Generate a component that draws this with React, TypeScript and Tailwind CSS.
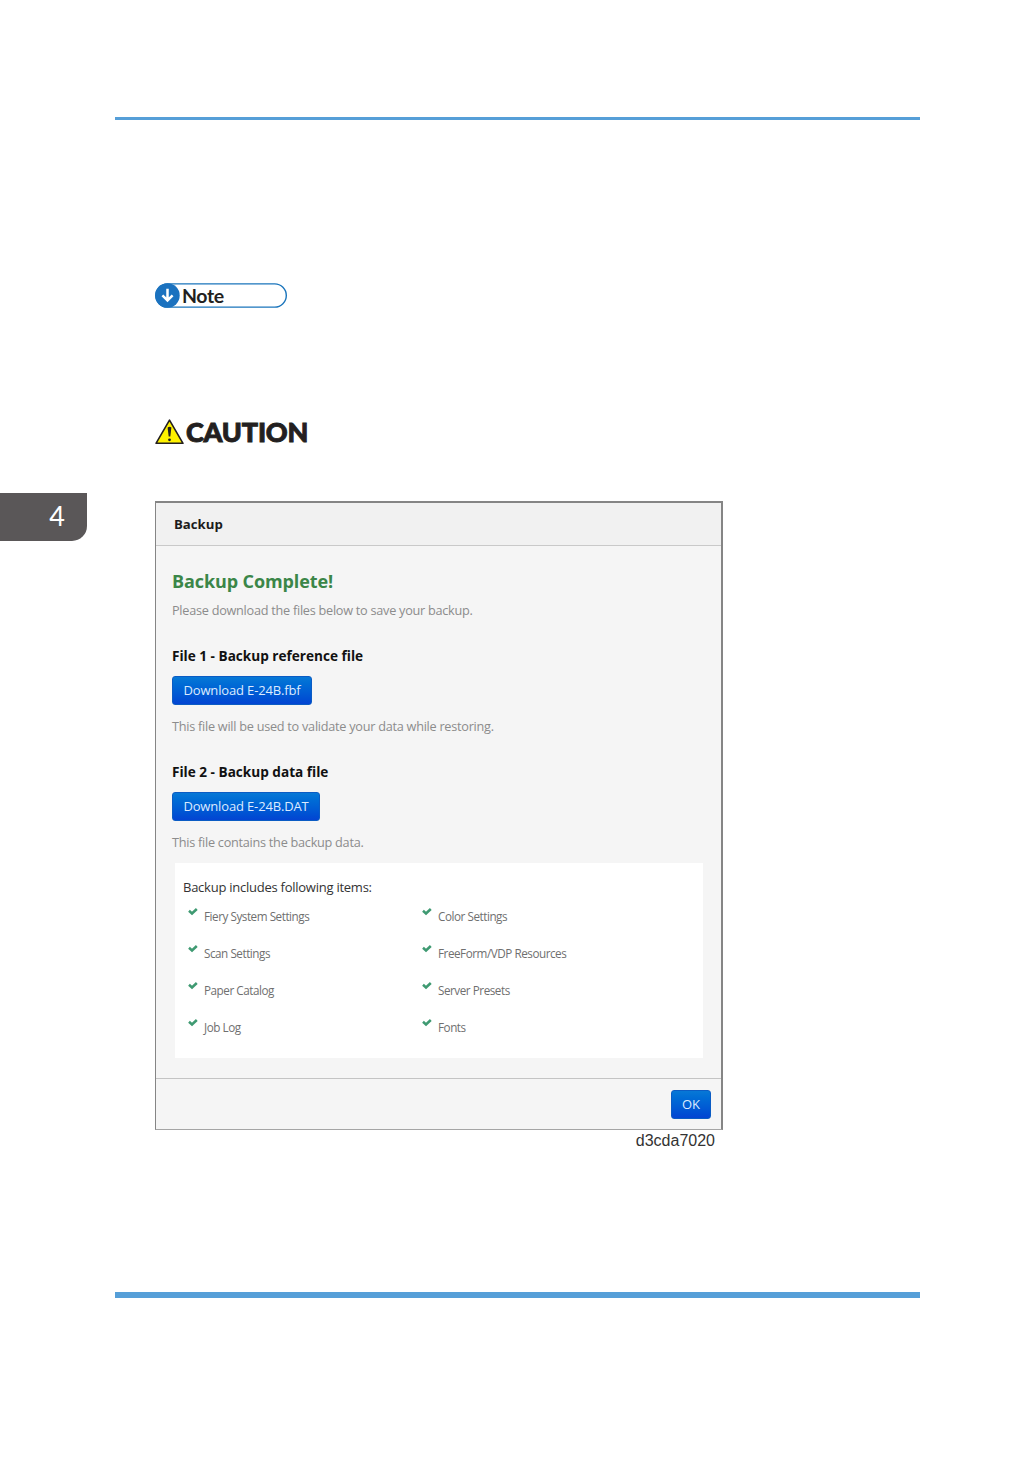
const leftItems = ["Fiery System Settings", "Scan Settings", "Paper Catalog", "Job Log"]
const rightItems = ["Color Settings", "FreeForm/VDP Resources", "Server Presets", "Fonts"]

function NoteLabel() {
  return (
    <svg className="h-[25px] w-[132px]" viewBox="0 0 132 25">
      <rect x="0.7" y="0.9" width="130.6" height="23.2" rx="11.6" fill="#fff" stroke="#1b75bc" strokeWidth="1.4" />
      <circle cx="12.5" cy="12.5" r="12.2" fill="#1b72bf" />
      <path d="M12.5 5.8v11M7.4 12.4l5.1 5 5.1-5" fill="none" stroke="#fff" strokeWidth="2.5" />
      <text x="27" y="19.6" className="fill-[#231f20] font-['Lato',sans-serif] text-[19.5px] font-bold tracking-[-0.4px]">
        Note
      </text>
    </svg>
  )
}

function CautionLabel() {
  return (
    <div className="flex h-[26px] items-center">
      <svg className="h-[26px] w-[29px] shrink-0" viewBox="0 0 29 26">
        <path d="M14.5 1.2 28 24.3H1Z" fill="#fff200" stroke="#231f20" strokeWidth="1.6" strokeLinejoin="round" />
        <path d="M12.6 8.6q1.9-1.6 3.8 0l-1.1 9h-1.6Z" fill="#231f20" />
        <circle cx="14.5" cy="20.8" r="1.4" fill="#231f20" />
      </svg>
      <span className="ml-[2px] font-['Lato',sans-serif] text-[27px] leading-[24px] font-black tracking-[-0.2px] text-[#231f20] [-webkit-text-stroke:0.9px_#231f20]">
        CAUTION
      </span>
    </div>
  )
}

function CheckItem({ label }: { label: string }) {
  return (
    <li className="flex h-[37px] items-start">
      <svg className="h-[9px] w-[10px] shrink-0" viewBox="0 0 10 9">
        <path d="M1 3.8 4 6.4 8.8 2" fill="none" stroke="#3f9a72" strokeWidth="2.6" />
      </svg>
      <span className="ml-[6px] text-[11.7px] leading-[18px] tracking-[-0.46px] text-[#6f6f6f]">{label}</span>
    </li>
  )
}

function Button({ label, className }: { label: string; className: string }) {
  return (
    <button
      className={`flex h-[29px] items-center justify-center rounded-[3px] border border-[#0b5cc4] bg-gradient-to-b from-[#0878d6] to-[#0444d2] pt-px text-[13px] tracking-[-0.15px] whitespace-nowrap text-[#dcebff] ${className}`}
    >
      {label}
    </button>
  )
}

function BackupDialog() {
  return (
    <section className="flex h-[629px] w-[568px] flex-col border border-t-2 border-r-2 border-[#858585] border-b-[#a5a5a5] bg-[#f5f5f5] font-['Open_Sans','Noto_Sans',sans-serif] whitespace-nowrap">
      <header className="flex h-[43px] shrink-0 items-center border-b border-[#c9c9c9] bg-[#f1f1f1] pt-[2px] pl-[18px]">
        <h1 className="text-[13.2px] font-bold text-[#1c1c1c]">Backup</h1>
      </header>
      <div className="flex-1 pl-4">
        <h2 className="mt-[22px] text-[18px] leading-[26px] font-bold tracking-[-0.1px] text-[#3b8648]">Backup Complete!</h2>
        <p className="mt-[6px] text-[12.7px] leading-[20px] tracking-[-0.26px] text-[#8c8c8c]">Please download the files below to save your backup.</p>

        <h3 className="mt-[26px] text-[13.6px] leading-[20px] font-bold text-[#111]">File 1 - Backup reference file</h3>
        <Button label="Download E-24B.fbf" className="mt-[10px] w-[140px]" />
        <p className="mt-[11px] text-[12.7px] leading-[20px] tracking-[-0.26px] text-[#8c8c8c]">This file will be used to validate your data while restoring.</p>

        <h3 className="mt-[26px] text-[13.6px] leading-[20px] font-bold text-[#111]">File 2 - Backup data file</h3>
        <Button label="Download E-24B.DAT" className="mt-[10px] w-[148px]" />
        <p className="mt-[11px] text-[12.7px] leading-[20px] tracking-[-0.26px] text-[#8c8c8c]">This file contains the backup data.</p>

        <div className="mt-[11px] ml-[3px] h-[195px] w-[528px] bg-white pt-[14px] pl-[8px]">
          <p className="text-[13px] leading-[20px] tracking-[-0.25px] text-[#333]">Backup includes following items:</p>
          <div className="mt-[10px] flex pl-[5px]">
            <ul className="w-[234px]">
              {leftItems.map((item) => (
                <CheckItem key={item} label={item} />
              ))}
            </ul>
            <ul>
              {rightItems.map((item) => (
                <CheckItem key={item} label={item} />
              ))}
            </ul>
          </div>
        </div>
      </div>
      <footer className="flex h-[51px] shrink-0 items-center justify-end border-t border-[#c4c4c4] pr-[10px]">
        <Button label="OK" className="w-[40px]" />
      </footer>
    </section>
  )
}

export default function App() {
  return (
    <main className="h-[1470px] w-[1036px] bg-white pt-[117px]">
      <hr className="mr-[116px] ml-[115px] h-[3px] border-0 bg-[#569fd8]" />
      <div className="mt-[163px] ml-[155px]">
        <NoteLabel />
      </div>
      <div className="mt-[111px] ml-[155px]">
        <CautionLabel />
      </div>
      <div className="mt-[48px] flex items-start">
        <div className="w-[155px]">
          <div className="flex h-[48px] w-[87px] items-center justify-end rounded-br-[15px] bg-[#5a5758] pr-[22px] pb-[2px] font-['Lato',sans-serif] text-[27px] text-white">
            4
          </div>
        </div>
        <div className="mt-2 w-[568px]">
          <BackupDialog />
          <p className="mt-[1px] pr-[8px] text-right font-['Liberation_Sans',sans-serif] text-[16px] leading-[20px] text-[#333]">d3cda7020</p>
        </div>
      </div>
      <hr className="mt-[141px] mr-[116px] ml-[115px] h-[6px] border-0 bg-[#569fd8]" />
    </main>
  )
}
